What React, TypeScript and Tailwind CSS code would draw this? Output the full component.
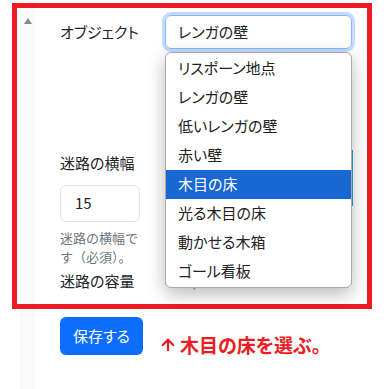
import { ArrowUp } from "lucide-react";

const OPTIONS = [
  "リスポーン地点",
  "レンガの壁",
  "低いレンガの壁",
  "赤い壁",
  "木目の床",
  "光る木目の床",
  "動かせる木箱",
  "ゴール看板",
];

const SELECTED = "木目の床";

export default function App() {
  return (
    <div className="relative h-[389px] w-[386px] overflow-hidden bg-white font-['Noto_Sans_CJK_JP','Noto_Sans',sans-serif] text-[15px] text-[#212529] [font-feature-settings:'palt']">
      <div className="flex h-full pl-[20px]">
        {/* scroll strip */}
        <div className="flex h-full w-[15px] justify-center bg-[#fafafa] pt-[18px]">
          <div className="h-0 w-0 border-x-[4px] border-b-[6px] border-x-transparent border-b-[#8a8a8a]" />
        </div>

        <div className="flex-1 pl-[25px] pt-[15px]">
          <div className="flex items-center">
            <div className="w-[105px]">オブジェクト</div>
            <div className="flex h-[34px] w-[187px] items-center rounded-[6px] border border-[#86b7fe] px-[12px] shadow-[0_0_0_3px_rgba(13,110,253,0.25)]">
              レンガの壁
            </div>
          </div>

          <div className="mt-[103px] flex items-start">
            <div className="w-[80px]">
              <div className="leading-[22px]">迷路の横幅</div>
              <div className="mt-[11px] flex h-[37px] w-[80px] items-center rounded-[6px] border border-[#dee2e6] pl-[14px]">
                15
              </div>
              <div className="mt-[6px] text-[13px] leading-[19px] text-[#6c757d] [font-feature-settings:normal]">
                迷路の横幅です（必須）。
              </div>
            </div>
            <div className="-mt-[2px] ml-[24px] h-[56px] w-[189px] border-r border-[#2aa3c9]" />
          </div>

          <div className="mt-[4px] flex items-center leading-[22px]">
            <div className="w-[105px]">迷路の容量</div>
            <div className="text-[#6c757d]">432 / 5072</div>
          </div>

          <div className="mt-[25px] flex items-end">
            <button className="h-[38px] w-[83px] rounded-[6px] bg-[#0d6efd] text-white">
              保存する
            </button>
            <div className="-mb-[4px] ml-[16px] flex items-center text-[19px] font-bold text-[#ed1c24]">
              <ArrowUp size={18} strokeWidth={3} className="mr-[3px]" />
              木目の床を選ぶ。
            </div>
          </div>
        </div>
      </div>

      {/* annotation frame */}
      <div className="pointer-events-none absolute left-[12px] top-[3px] h-[306px] w-[360px] border-[5px] border-[#ed1c24]" />

      {/* open select popup */}
      <div className="absolute left-[165px] top-[52px] w-[187px] overflow-hidden rounded-[6px] border border-[#a9a9a9] bg-white py-[1px] shadow-[0_6px_18px_rgba(0,0,0,0.28)]">
        {OPTIONS.map((opt) => (
          <div
            key={opt}
            className={`flex h-[29px] items-center pl-[12px] ${
              opt === SELECTED ? "bg-[#1967d2] text-white" : "text-[#222]"
            }`}
          >
            {opt}
          </div>
        ))}
      </div>
    </div>
  );
}
